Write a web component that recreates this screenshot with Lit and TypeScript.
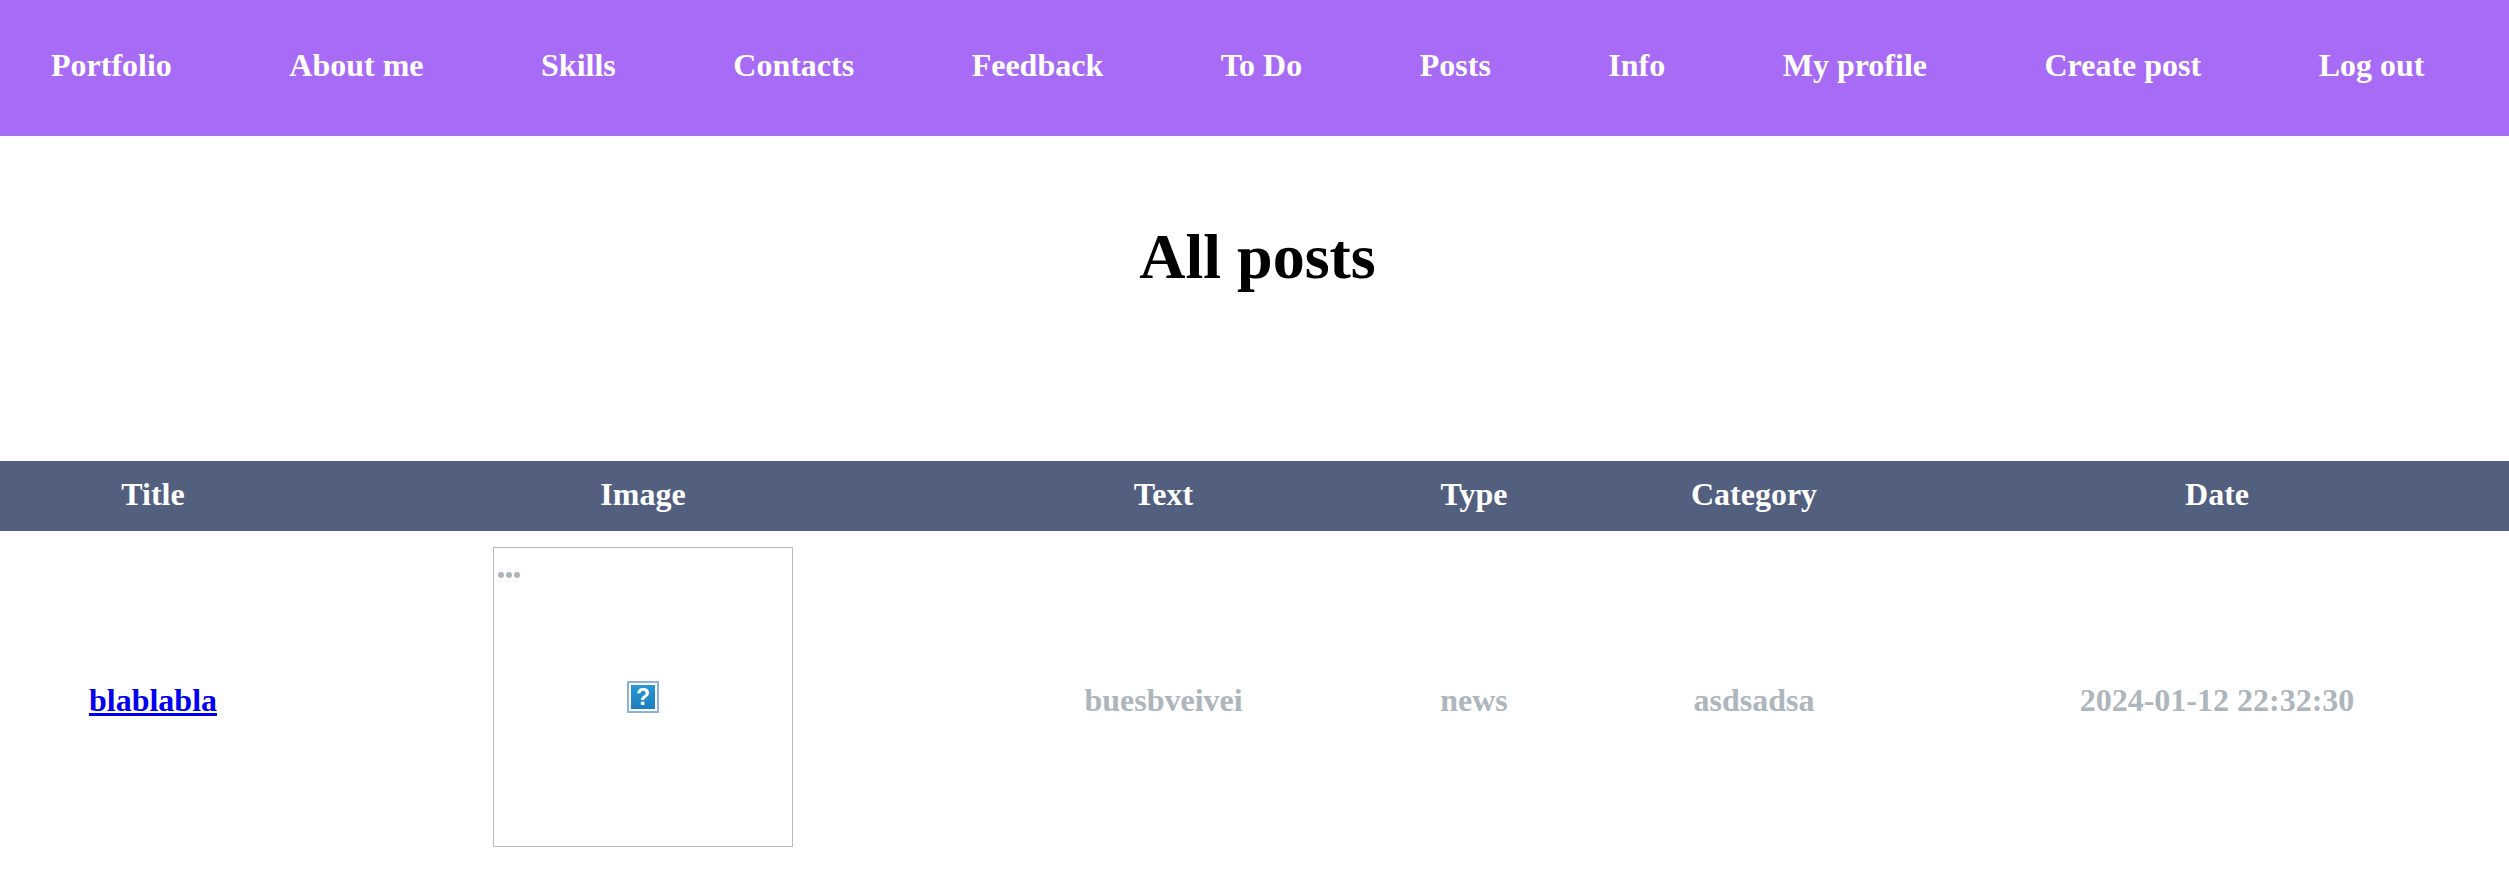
import { LitElement, css, html } from 'lit'
import { customElement } from 'lit/decorators.js'

const NAV_LINKS = ['Portfolio', 'About me', 'Skills', 'Contacts', 'Feedback', 'To Do', 'Posts', 'Info', 'My profile', 'Create post', 'Log out']

const COLUMN_WIDTHS = [324, 638, 403, 218, 342, 584]

@customElement('app-root')
export class AppRoot extends LitElement {
   static styles = css`
      :host {
         display: block;
         font-family: "Liberation Serif", "Times New Roman", serif;
         font-size: 32px;
         font-weight: 700;
         color: #000;
         background: #fff;
      }

      .nav {
         display: flex;
         align-items: center;
         gap: 117.5px;
         box-sizing: border-box;
         height: 136px;
         padding: 0 0 6px 51px;
         background: #a86bf6;
      }

      .nav a {
         color: #fff;
         text-decoration: none;
         white-space: nowrap;
      }

      h1 {
         margin: 84px 0 167px;
         padding-left: 6px;
         font-size: 64px;
         line-height: 74px;
         text-align: center;
      }

      table {
         width: 100%;
         table-layout: fixed;
         border-collapse: collapse;
      }

      th, td {
         text-align: center;
         vertical-align: middle;
      }

      th {
         padding: 15px 0 18px;
         color: #fff;
         background: #525f7f;
      }

      td {
         padding: 16px 0 18px;
         color: #adb5bd;
      }

      td.image-cell {
         padding: 16px 0;
      }

      .title-cell {
         padding-right: 18px;
      }

      td a {
         color: #0000ee;
      }

      /* broken image placeholder */
      .thumb {
         display: inline-block;
         box-sizing: border-box;
         position: relative;
         width: 300px;
         height: 300px;
         border: 1px solid #bbb;
         vertical-align: baseline;
      }

      .dots {
         position: absolute;
         left: 4px;
         top: 24px;
         display: flex;
         gap: 2px;
      }

      .dots i {
         width: 6px;
         height: 6px;
         border-radius: 50%;
         background: #adb5bd;
      }

      .missing {
         position: absolute;
         left: 133px;
         top: 133px;
         box-sizing: border-box;
         width: 32px;
         height: 32px;
         padding: 2px;
         border: 2px solid #8fb0d8;
         background: #fff;
      }

      .missing span {
         display: flex;
         align-items: center;
         justify-content: center;
         height: 100%;
         font-family: "Liberation Sans", Arial, sans-serif;
         font-size: 23px;
         line-height: 1;
         color: #fff;
         background: linear-gradient(#2a98d4, #1b7dbf);
      }
   `

   render() {
      return html`
         <nav class="nav">
            ${NAV_LINKS.map((label) => html`<a href="#">${label}</a>`)}
         </nav>
         <h1>All posts</h1>
         <table>
            <colgroup>
               ${COLUMN_WIDTHS.map((w) => html`<col style="width: ${w}px">`)}
            </colgroup>
            <thead>
               <tr>
                  <th class="title-cell">Title</th>
                  <th>Image</th>
                  <th>Text</th>
                  <th>Type</th>
                  <th>Category</th>
                  <th>Date</th>
               </tr>
            </thead>
            <tbody>
               <tr>
                  <td class="title-cell"><a href="#">blablabla</a></td>
                  <td class="image-cell">
                     <div class="thumb">
                        <div class="dots"><i></i><i></i><i></i></div>
                        <div class="missing"><span>?</span></div>
                     </div>
                  </td>
                  <td>buesbveivei</td>
                  <td>news</td>
                  <td>asdsadsa</td>
                  <td>2024-01-12 22:32:30</td>
               </tr>
            </tbody>
         </table>
      `
   }
}
